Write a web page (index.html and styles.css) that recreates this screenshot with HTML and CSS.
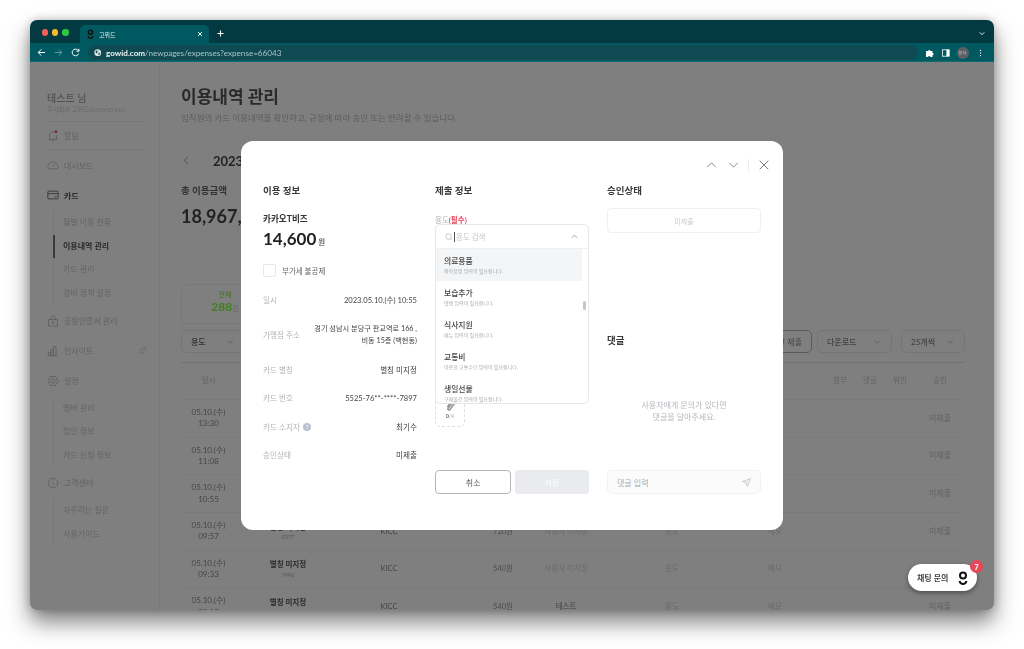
FILE: index.html
```html
<!DOCTYPE html>
<html lang="ko">
<head>
<meta charset="utf-8">
<title>고위드</title>
<link rel="stylesheet" href="styles.css">
</head>
<body>
<div class="window">
  <div class="tabstrip">
    <div class="lights"><i class="light red"></i><i class="light yellow"></i><i class="light green"></i></div>
    <div class="tab">
      <svg class="tab-logo" viewBox="0 0 10 14"><circle cx="5" cy="4.600" r="3" fill="none" stroke="#111" stroke-width="2.200"/><path d="M1.500 10c.6 2 2 3 3.500 3s2.900-1 3.500-3" fill="none" stroke="#111" stroke-width="2.200"/></svg>
      <span class="tab-title">고위드</span>
      <svg class="tab-x" viewBox="0 0 8 8"><path d="M1.500 1.500l5 5M6.500 1.500l-5 5" stroke="#fff" stroke-width="1.300"/></svg>
    </div>
    <svg class="tab-plus" viewBox="0 0 8 8"><path d="M4 .5v7M.5 4h7" stroke="#fff" stroke-width="1.300"/></svg>
    <svg class="tab-more" viewBox="0 0 8 6"><path d="M1 1.500l3 3 3-3" fill="none" stroke="#fff" stroke-width="1.200"/></svg>
  </div>
  <div class="toolbar">
    <svg class="tool" viewBox="0 0 10 10"><path d="M9 5H1.500M4.800 1.500L1.300 5l3.500 3.500" fill="none" stroke="#fff" stroke-width="1.100"/></svg>
    <svg class="tool dim" viewBox="0 0 10 10"><path d="M1 5h7.500M5.200 1.500L8.700 5 5.200 8.500" fill="none" stroke="#fff" stroke-width="1.100"/></svg>
    <svg class="tool" viewBox="0 0 10 10"><path d="M8.500 6.200A3.700 3.700 0 1 1 7.600 2.300L8.800 3.500M8.800.9v2.700H6.100" fill="none" stroke="#fff" stroke-width="1.100"/></svg>
    <div class="address">
      <svg class="globe" viewBox="0 0 10 10"><circle cx="5" cy="5" r="4.600" fill="#d5dfe0"/><path d="M2 3l2-1 1 2-2 2zM6 6l2-1 0 2-2 1z" fill="#0f4a52"/></svg>
      <span class="url"><b>gowid.com</b>/newpages/expenses?expense=66043</span>
    </div>
    <svg class="ext" viewBox="0 0 10 10"><path d="M1 3h2.200a1.100 1.100 0 1 1 2.200 0h2.100v2.100a1.100 1.100 0 1 1 0 2.200V9H5.300a1.100 1.100 0 1 0-2.200 0H1z" fill="#fff"/></svg>
    <svg class="panel" viewBox="0 0 10 10"><rect x=".5" y="1" width="8.500" height="8" fill="none" stroke="#fff"/><rect x="5.500" y="1" width="3.500" height="8" fill="#fff"/></svg>
    <span class="avatar">민덕</span>
    <svg class="dots" viewBox="0 0 4 10"><circle cx="2" cy="1.500" r=".9" fill="#fff"/><circle cx="2" cy="5" r=".9" fill="#fff"/><circle cx="2" cy="8.500" r=".9" fill="#fff"/></svg>
  </div>

  <div class="content">
    <aside class="sidebar">
      <div class="user-name">테스트 님</div>
      <div class="user-co">주식회사 고위드(GOWID Inc)</div>
      <div class="rule rule-top"></div>
      <div class="menu alarm">
        <svg class="mi" viewBox="0 0 14 14"><path d="M3 10V6a4 4 0 0 1 6-3.500M11 6v4l1 1H2l1-1M5.500 12.500h3" fill="none" stroke="#aaa" stroke-width=".8"/><circle cx="10.500" cy="2" r="1.500" fill="#ff2a40"/></svg>
        <span>알림</span>
      </div>
      <div class="rule"></div>
      <div class="menu">
        <svg class="mi" viewBox="0 0 14 14"><path d="M3 11.500h8a2 2 0 0 0 2-2A6 6 0 0 0 1 9.500a2 2 0 0 0 2 2zM7 8.500l2.500-3" fill="none" stroke="#aaa" stroke-width=".8"/></svg>
        <span>대시보드</span>
      </div>
      <div class="menu strong">
        <svg class="mi" viewBox="0 0 14 14"><rect x="1" y="2.500" width="12" height="9" rx=".8" fill="none" stroke="#555" stroke-width=".9"/><path d="M1 5.500h12M9 9h2.500" stroke="#555" stroke-width=".9"/></svg>
        <span>카드</span>
      </div>
      <div class="subs">
        <div class="sub">월별 이용 현황</div>
        <div class="sub active">이용내역 관리</div>
        <div class="sub">카드 관리</div>
        <div class="sub">경비 정책 설정</div>
      </div>
      <div class="menu">
        <svg class="mi" viewBox="0 0 14 14"><rect x="2" y="5.500" width="10" height="7.500" fill="none" stroke="#aaa" stroke-width=".8"/><path d="M4.500 5.500V3.500a2.500 2.500 0 0 1 5 0v2" fill="none" stroke="#aaa" stroke-width=".8"/><circle cx="7" cy="8.800" r="1.200" fill="none" stroke="#aaa" stroke-width=".7"/></svg>
        <span>공동인증서 관리</span>
      </div>
      <div class="menu insight">
        <svg class="mi" viewBox="0 0 14 14"><path d="M1.500 12.500V8.500h3v4M4.500 12.500V5.500h3v7M7.500 12.500V2h3v10.500M1 12.500h11" fill="none" stroke="#aaa" stroke-width=".8"/></svg>
        <span>인사이트</span>
        <svg class="out" viewBox="0 0 10 10"><path d="M7 5.500V8.500H1.500V3h3M5 1h4v4M9 1L5 5" fill="none" stroke="#bbb" stroke-width=".7"/></svg>
      </div>
      <div class="menu">
        <svg class="mi" viewBox="0 0 14 14"><path d="M4 1.800h6L13 7l-3 5.200H4L1 7z" fill="none" stroke="#aaa" stroke-width=".8"/><circle cx="7" cy="7" r="2.300" fill="none" stroke="#aaa" stroke-width=".8"/></svg>
        <span>설정</span>
      </div>
      <div class="subs">
        <div class="sub">멤버 관리</div>
        <div class="sub">법인 정보</div>
        <div class="sub">카드 신청 정보</div>
      </div>
      <div class="menu">
        <svg class="mi" viewBox="0 0 14 14"><circle cx="7" cy="7" r="5.500" fill="none" stroke="#aaa" stroke-width=".8"/><path d="M7 6v4M7 4v1" stroke="#aaa" stroke-width=".8"/></svg>
        <span>고객센터</span>
      </div>
      <div class="subs">
        <div class="sub">자주하는 질문</div>
        <div class="sub">사용가이드</div>
      </div>
    </aside>

    <main class="main">
      <h1 class="title">이용내역 관리</h1>
      <p class="lead">임직원의 카드 이용내역을 확인하고, 규정에 따라 승인 또는 반려할 수 있습니다.</p>
      <div class="period">
        <svg class="prev" viewBox="0 0 6 10"><path d="M5 1L1 5l4 4" fill="none" stroke="#888" stroke-width=".9"/></svg>
        <span>2023년 5월</span>
      </div>
      <div class="total-label">총 이용금액</div>
      <div class="total">18,967,000원</div>
      <div class="stat"><span class="stat-k">전체</span><span class="stat-v">288<small>건</small></span></div>
      <div class="filters">
        <div class="select purpose"><span>용도</span><svg class="chev" viewBox="0 0 8 5"><path d="M1 1l3 3 3-3" fill="none" stroke="#999" stroke-width=".7"/></svg></div>
        <div class="btn-submit">사전 제출</div>
        <div class="select download"><span>다운로드</span><svg class="chev" viewBox="0 0 8 5"><path d="M1 1l3 3 3-3" fill="none" stroke="#999" stroke-width=".7"/></svg></div>
        <div class="select perpage"><span>25개씩</span><svg class="chev" viewBox="0 0 8 5"><path d="M1 1l3 3 3-3" fill="none" stroke="#999" stroke-width=".7"/></svg></div>
      </div>
      <div class="table">
        <div class="tr th"><span>일시</span><span>별칭</span><span>가맹점</span><span>금액</span><span>사용자</span><span>용도</span><span>메모</span><span></span><span>첨부</span><span>댓글</span><span>위반</span><span>승인</span></div>
        <div class="tr"><span class="when">05.10.(수)<br>13:30</span><span class="nm">별칭 미지정<small>7996</small></span><span>KICC</span><span class="amt">540원</span><span class="fade">사용자 미지정</span><span class="fade">용도</span><span class="fade">메모</span><span></span><span></span><span></span><span></span><span class="st">미제출</span></div>
        <div class="tr"><span class="when">05.10.(수)<br>11:08</span><span class="nm">별칭 미지정<small>7996</small></span><span>KICC</span><span class="amt">720원</span><span class="fade">사용자 미지정</span><span class="fade">용도</span><span class="fade">메모</span><span></span><span></span><span></span><span></span><span class="st">미제출</span></div>
        <div class="tr"><span class="when">05.10.(수)<br>10:55</span><span class="nm">별칭 미지정<small>7897</small></span><span>KICC</span><span class="amt">14,600원</span><span class="fade">최기수</span><span class="fade">용도</span><span class="fade">메모</span><span></span><span></span><span></span><span></span><span class="st">미제출</span></div>
        <div class="tr"><span class="when">05.10.(수)<br>09:57</span><span class="nm">별칭 미지정<small>9377</small></span><span>KICC</span><span class="amt">720원</span><span class="fade">사용자 미지정</span><span class="fade">용도</span><span class="fade">메모</span><span></span><span></span><span></span><span></span><span class="st">미제출</span></div>
        <div class="tr"><span class="when">05.10.(수)<br>09:33</span><span class="nm">별칭 미지정<small>7996</small></span><span>KICC</span><span class="amt">540원</span><span class="fade">사용자 미지정</span><span class="fade">용도</span><span class="fade">메모</span><span></span><span></span><span></span><span></span><span class="st">미제출</span></div>
        <div class="tr"><span class="when">05.10.(수)<br>09:12</span><span class="nm">별칭 미지정<small>7996</small></span><span>KICC</span><span class="amt">540원</span><span class="who">테스트</span><span class="fade">용도</span><span class="fade">메모</span><span></span><span></span><span></span><span></span><span class="st">미제출</span></div>
      </div>
    </main>

    <div class="overlay">
      <section class="modal">
        <div class="modal-nav">
          <svg class="nav-chev" viewBox="0 0 12 7"><path d="M1 6l5-5 5 5" fill="none" stroke="#777" stroke-width="1"/></svg>
          <svg class="nav-chev" viewBox="0 0 12 7"><path d="M1 1l5 5 5-5" fill="none" stroke="#777" stroke-width="1"/></svg>
          <i class="nav-sep"></i>
          <svg class="nav-x" viewBox="0 0 10 10"><path d="M.7.7l8.600 8.600M9.300.7L.7 9.300" stroke="#777" stroke-width="1"/></svg>
        </div>
        <div class="cols">
          <div class="col">
            <h2 class="h">이용 정보</h2>
            <div class="merchant">카카오T비즈</div>
            <div class="amount">14,600<small>원</small></div>
            <label class="vat"><i class="box"></i>부가세 불공제</label>
            <div class="info first"><span class="k">일시</span><span class="v">2023.05.10.(수) 10:55</span></div>
            <div class="info addr"><span class="k">가맹점 주소</span><span class="v">경기 성남시 분당구 판교역로 166 ,<br>비동 15층 (백현동)</span></div>
            <div class="info"><span class="k">카드 별칭</span><span class="v">별칭 미지정</span></div>
            <div class="info"><span class="k">카드 번호</span><span class="v">5525-76**-****-7897</span></div>
            <div class="info"><span class="k">카드 소지자<i class="help">?</i></span><span class="v">최기수</span></div>
            <div class="info"><span class="k">승인상태</span><span class="v">미제출</span></div>
          </div>
          <div class="col">
            <h2 class="h">제출 정보</h2>
            <div class="field-label">용도<b>(필수)</b></div>
            <div class="combo">
              <div class="search">
                <svg class="mag" viewBox="0 0 10 10"><circle cx="4.500" cy="4.500" r="3.500" fill="none" stroke="#aaa" stroke-width=".8"/><path d="M7 7l2 2" stroke="#aaa" stroke-width=".8"/></svg>
                <i class="caret"></i><span>용도 검색</span>
                <svg class="up" viewBox="0 0 8 5"><path d="M1 4l3-3 3 3" fill="none" stroke="#777" stroke-width=".8"/></svg>
              </div>
              <div class="list">
                <div class="opt hot"><b>의료용품</b><span>의약품명 입력이 필요합니다.</span></div>
                <div class="opt"><b>보습추가</b><span>맛템 입력이 필요합니다.</span></div>
                <div class="opt"><b>식사지원</b><span>메뉴 입력이 필요합니다.</span></div>
                <div class="opt"><b>교통비</b><span>이용한 교통수단 입력이 필요합니다.</span></div>
                <div class="opt"><b>생일선물</b><span>구매물건 입력이 필요합니다.</span></div>
                <i class="thumb"></i>
              </div>
            </div>
            <div class="attach">
              <svg class="clip" viewBox="0 0 10 12"><path d="M2 7.500l4-5.500a1.700 1.700 0 0 1 2.700 2L4.500 9.800a1 1 0 0 1-1.600-1.200l3.700-5" fill="none" stroke="#999" stroke-width="1.500"/></svg>
              <span><b>0</b>/4</span>
            </div>
            <div class="actions"><button class="cancel">취소</button><button class="save">저장</button></div>
          </div>
          <div class="col col-side">
            <h2 class="h">승인상태</h2>
            <div class="status">미제출</div>
            <h2 class="h comments">댓글</h2>
            <p class="empty">사용자에게 문의가 있다면<br>댓글을 달아주세요.</p>
            <div class="comment-input">
              <span>댓글 입력</span>
              <svg class="send" viewBox="0 0 10 10"><path d="M9.300.8L.8 3.800l3.500 1.700 1.700 3.700zM4.300 5.500l2-2" fill="none" stroke="#aaa" stroke-width=".7"/></svg>
            </div>
          </div>
        </div>
      </section>
    </div>

    <div class="chat">
      <span>채팅 문의</span>
      <svg class="chat-logo" viewBox="0 0 10 14"><circle cx="5" cy="4.600" r="3" fill="none" stroke="#111" stroke-width="2"/><path d="M1.500 10c.6 2 2 3 3.500 3s2.900-1 3.500-3" fill="none" stroke="#111" stroke-width="2"/></svg>
      <b class="chat-badge">7</b>
    </div>
  </div>
</div>
</body>
</html>
```

FILE: styles.css
```css
* { box-sizing: border-box; }
html, body { margin: 0; height: 100%; background: #fff; overflow: hidden; }
body {
  padding: 20px 30px 39px;
  font-family: Lato, "Noto Sans CJK KR", sans-serif;
}
svg { display: block; flex: none; }
h1, h2, p { margin: 0; }

.window {
  height: 590px;
  border-radius: 7px;
  overflow: hidden;
  display: flex;
  flex-direction: column;
  background: #fff;
  box-shadow: 0 12px 22px rgba(0,0,0,.5), 0 0 10px rgba(0,0,0,.22);
  filter: blur(.35px);
}

/* browser chrome */
.tabstrip { height: 23px; background: #033a41; display: flex; align-items: flex-end; flex: none; }
.lights { display: flex; gap: 3.800px; padding: 0 0 7px 11.500px; width: 50px; }
.light { width: 6.600px; height: 6.600px; border-radius: 50%; flex: none; }
.red { background: #f0605a; }
.yellow { background: #f8bb2e; }
.green { background: #2cc840; }
.tab {
  width: 129px; height: 18px; background: #005860; border-radius: 5px 5px 0 0;
  display: flex; align-items: center; padding: 0 6px 0 7px;
}
.tab-logo { width: 7px; height: 10px; }
.tab-title { color: #e8f0f0; font-size: 6px; margin-left: 5px; flex: 1; }
.tab-x { width: 6px; height: 6px; }
.tab-plus { width: 7px; height: 7px; margin: 0 0 6px 8px; }
.tab-more { width: 6px; height: 5px; margin: 0 9px 7px auto; }
.toolbar { height: 19px; background: #005860; display: flex; align-items: center; flex: none; border-bottom: 1px solid #0d6c73; padding: 1px 0 0 7px; }
.tool { width: 9px; height: 9px; margin-right: 8px; }
.tool.dim { opacity: .4; }
.address {
  width: 830px; height: 15px; margin-left: -.5px; background: #0f4a52; border-radius: 8px;
  display: flex; align-items: center; padding-left: 6px;
}
.globe { width: 7.500px; height: 7.500px; }
.url { color: #a9c4c7; font-size: 8.100px; margin-left: 5px; white-space: nowrap; }
.url b { color: #eef4f4; font-weight: 700; }
.ext { width: 10px; height: 10px; margin-left: 7px; }
.panel { width: 8px; height: 8px; margin-left: 7px; }
.avatar { width: 12px; height: 12px; border-radius: 50%; background: #5b6066; color: #ccc; font-size: 4px; display: flex; align-items: center; justify-content: center; margin-left: 7px; }
.dots { width: 3px; height: 8px; margin-left: 10px; }

/* app beneath the dialog */
.content { flex: 1; position: relative; display: flex; overflow: hidden; min-height: 0; }
.sidebar { width: 130px; flex: none; padding: 29px 13px 0 17px; border-right: 1px solid #f3f3f3; color: #c4c4c4; }
.user-name { font-size: 10px; line-height: 14px; font-weight: 500; color: #a2a2a2; }
.user-co { font-size: 6.300px; line-height: 9px; color: #d0d0d0; white-space: nowrap; }
.rule { height: 1px; background: #f1f1f1; }
.rule-top { margin-top: 7px; }
.menu { height: 30px; display: flex; align-items: center; gap: 5px; font-size: 8px; color: #c2c2c2; }
.alarm { height: 27px; }
.menu .mi { width: 12px; height: 12px; }
.strong { color: #555; font-weight: 700; }
.insight .out { width: 7px; height: 7px; margin-left: auto; }
.subs { margin-left: 6px; padding-top: 1px; border-left: 1px solid #f1f1f1; }
.sub { height: 23.700px; line-height: 23.700px; font-size: 8px; padding-left: 9px; color: #c8c8c8; white-space: nowrap; }
.sub.active { color: #555; font-weight: 700; border-left: 2px solid #777; padding-left: 8px; margin-left: -1px; }

.main { width: 784px; margin-left: 21px; padding-top: 24px; flex: none; }
.title { font-size: 17px; line-height: 22px; font-weight: 700; color: #555; }
.lead { font-size: 8.500px; line-height: 12px; margin-top: 4px; color: #b8b8b8; white-space: nowrap; }
.period { display: flex; align-items: center; margin-top: 26px; height: 20px; font-size: 13px; font-weight: 700; color: #444; }
.prev { width: 6px; height: 9px; margin: 0 24px 0 2px; }
.total-label { margin-top: 15px; font-size: 9.500px; line-height: 12px; font-weight: 700; color: #666; }
.total { margin-top: 7px; font-size: 18px; line-height: 24px; font-weight: 700; color: #444; }
.stat {
  margin-top: 56px; width: 88px; height: 40px; border: 1px solid #f0f0f0; border-radius: 6px 6px 0 0;
  display: flex; flex-direction: column; align-items: center; padding-top: 4px;
}
.stat-k { font-size: 7px; line-height: 10px; color: #7fe040; }
.stat-v { font-size: 12px; line-height: 15px; font-weight: 700; color: #7fff40; white-space: nowrap; }
.stat-v small { font-size: 7px; color: #ccc; font-weight: 400; }
.filters { margin-top: 6px; height: 23px; display: flex; align-items: stretch; }
.select { border: 1px solid #eaeaea; border-radius: 5px; display: flex; align-items: center; justify-content: space-between; padding: 0 10px 0 9px; font-size: 8px; font-weight: 500; color: #888; }
.purpose { width: 64px; color: #666; }
.download { width: 75px; margin-left: 5px; }
.perpage { width: 64px; margin-left: 9px; }
.chev { width: 7px; height: 4px; }
.btn-submit { margin-left: auto; width: 60px; border: 1px solid #b4b4b4; border-radius: 5px; display: flex; align-items: center; justify-content: flex-end; padding-right: 9px; font-size: 8px; color: #888; white-space: nowrap; }
.table { margin-top: 9px; border-top: 1px solid #e6e6e6; }
.tr {
  display: grid;
  grid-template-columns: 55px 104px 98px 90px 76px 136px 70px 15px 30px 30px 30px 50px;
  height: 37.670px; align-items: center; justify-items: center; text-align: center;
  font-size: 7.500px; line-height: 11.400px; color: #888; border-bottom: 1px solid #f4f4f4;
}
.tr.th { height: 37px; color: #c8c8c8; }
.when { color: #8c8c8c; font-size: 8px; white-space: nowrap; }
.nm { color: #555; font-weight: 700; white-space: nowrap; }
.nm small { display: block; font-size: 5.500px; line-height: 8px; color: #aaa; font-weight: 400; }
.amt { justify-self: end; padding-right: 15px; white-space: nowrap; color: #999; }
.fade { color: #d4d4d4; white-space: nowrap; }
.who { color: #888; }
.st { color: #c4c4c4; font-size: 8px; }

/* dialog */
.overlay { position: absolute; inset: 0; background: rgba(0,0,0,.5); display: flex; align-items: center; justify-content: center; }
.modal { width: 542px; height: 389px; margin-bottom: 1px; background: #fff; border-radius: 12px; padding: 0 22px; display: flex; flex-direction: column; }
.modal-nav { height: 43px; display: flex; align-items: center; flex: none; padding-top: 5px; margin-right: -8px; justify-content: flex-end; }
.nav-chev { width: 11px; height: 6px; margin-right: 11px; }
.nav-sep { width: 1px; height: 13px; background: #eee; margin: 0 10px 0 -2px; }
.nav-x { width: 10px; height: 10px; }
.cols { display: grid; grid-template-columns: repeat(3, 154px); gap: 18px; flex: 1; min-height: 0; }
.col { display: flex; flex-direction: column; min-width: 0; position: relative; }
.h { font-size: 9.500px; line-height: 14px; font-weight: 700; color: #3a3a3a; }
.merchant { margin-top: 15px; font-size: 8.600px; line-height: 12px; font-weight: 700; color: #333; }
.amount { margin-top: 3px; font-size: 17px; line-height: 22px; font-weight: 700; color: #222; }
.amount small { font-size: 7.500px; font-weight: 500; color: #444; margin-left: 2px; }
.vat { margin-top: 10px; display: flex; align-items: center; gap: 6px; font-size: 7.500px; color: #666; height: 13px; }
.box { width: 13px; height: 13px; border: 1px solid #e8e8e8; border-radius: 2px; }
.info { display: flex; justify-content: space-between; align-items: center; font-size: 7.600px; line-height: 12px; height: 28.500px; white-space: nowrap; }
.info.first { margin-top: 9px; }
.info.addr { height: 41px; }
.info.addr .v { font-size: 7.200px; }
.k { color: #b0b4ba; display: flex; align-items: center; gap: 3px; }
.v { color: #444; text-align: right; }
.help { width: 8.500px; height: 8.500px; border-radius: 50%; background: #b8c2cf; color: #fff; font-size: 6px; font-style: normal; display: flex; align-items: center; justify-content: center; }
.field-label { margin-top: 17.500px; font-size: 7.500px; line-height: 10px; color: #aeb2b8; }
.field-label b { color: #e8475a; }
.combo { position: absolute; top: 40px; left: 0; right: 0; height: 179.500px; border: 1px solid #e6e8eb; border-radius: 5px; background: #fff; z-index: 2; }
.search { height: 24px; display: flex; align-items: center; padding: 0 10px 0 9px; border-bottom: 1px solid #eef0f2; font-size: 7.500px; color: #c4c7cb; }
.mag { width: 8px; height: 8px; }
.caret { width: 1px; height: 10px; background: #555; margin: 0 1px; }
.up { width: 7px; height: 5px; margin-left: auto; }
.list { height: 153.500px; overflow: hidden; position: relative; }
.opt { height: 32.200px; width: 146px; padding-left: 8px; display: flex; flex-direction: column; justify-content: center; }
.opt b { font-size: 7.800px; line-height: 11px; font-weight: 500; color: #444; white-space: nowrap; }
.opt span { font-size: 5px; line-height: 8px; color: #a8acb2; white-space: nowrap; }
.opt.hot { background: #f4f5f7; }
.thumb { position: absolute; right: 2px; top: 52px; width: 3px; height: 9px; background: #c4c6c9; border-radius: 2px; }
.attach { position: absolute; top: 207px; left: 0; width: 30px; height: 36px; border: 1px dashed #dcdfe3; border-radius: 5px; display: flex; flex-direction: column; align-items: center; justify-content: flex-end; padding-bottom: 6px; font-size: 5px; line-height: 7px; color: #aaa; }
.clip { width: 11px; height: 13px; margin-bottom: 1px; }
.attach b { color: #666; }
.actions { position: absolute; top: 286px; left: 0; right: 0; display: flex; gap: 4px; }
.actions button { flex: 1; height: 24px; border-radius: 4px; font: inherit; font-size: 8px; padding: 0; }
.cancel { background: #fff; border: 1px solid #b3b6ba; color: #555; font-weight: 500; }
.save { background: #e9ebee; border: 0; color: #fff; font-weight: 700; }
.status { margin-top: 10px; height: 25px; border: 1px solid #eff0f2; border-radius: 4px; display: flex; align-items: center; justify-content: center; font-size: 7px; color: #c8ccd1; }
.comments { margin-top: 101px; }
.empty { margin-top: 50.500px; text-align: center; font-size: 8px; line-height: 12px; color: #b4b8bd; }
.comment-input { position: absolute; top: 286px; left: 0; right: 0; height: 24px; border: 1px solid #f0f1f3; border-radius: 5px; background: #fbfbfc; display: flex; align-items: center; justify-content: space-between; padding: 0 9px; font-size: 8px; color: #a8acb2; }
.send { width: 9px; height: 9px; }

/* floating chat */
.chat {
  position: absolute; left: 878px; top: 502px; width: 69px; height: 27px; background: #fff; border-radius: 14px;
  display: flex; align-items: center; padding-left: 9px; font-size: 8px; font-weight: 700; color: #444;
  box-shadow: 0 2px 5px rgba(0,0,0,.4);
}
.chat-logo { width: 10px; height: 14px; margin-left: 10px; }
.chat-badge { position: absolute; right: -6px; top: -4px; width: 13px; height: 13px; border-radius: 50%; background: #e8475a; color: #fff; font-size: 7px; display: flex; align-items: center; justify-content: center; }
```
